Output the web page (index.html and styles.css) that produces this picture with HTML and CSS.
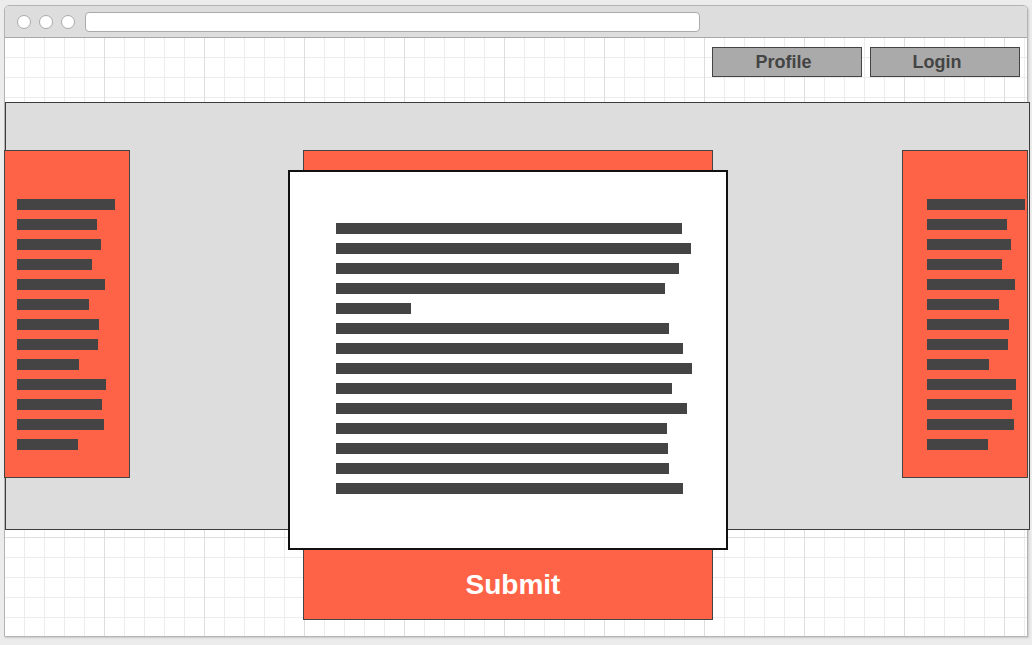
FILE: index.html
```html
<!DOCTYPE html>
<html>
<head>
<meta charset="utf-8">
<link rel="stylesheet" href="styles.css">
</head>
<body>
<div class="window">
  <div class="titlebar">
    <span class="dot"></span><span class="dot"></span><span class="dot"></span>
    <div class="address"></div>
  </div>
  <div class="content">
    <div class="header">
      <button class="btn btn-profile">Profile</button>
      <button class="btn btn-login">Login</button>
    </div>
    <div class="band">
      <div class="side side-left">
        <div class="bars">
          <i class="bar" style="width:98px"></i><i class="bar" style="width:80px"></i><i class="bar" style="width:84px"></i><i class="bar" style="width:75px"></i><i class="bar" style="width:88px"></i><i class="bar" style="width:72px"></i><i class="bar" style="width:82px"></i><i class="bar" style="width:81px"></i><i class="bar" style="width:62px"></i><i class="bar" style="width:89px"></i><i class="bar" style="width:85px"></i><i class="bar" style="width:87px"></i><i class="bar" style="width:61px"></i>
        </div>
      </div>
      <div class="center">
        <div class="card">
          <div class="bars">
            <i class="bar" style="width:346px"></i><i class="bar" style="width:355px"></i><i class="bar" style="width:343px"></i><i class="bar" style="width:329px"></i><i class="bar" style="width:75px"></i><i class="bar" style="width:333px"></i><i class="bar" style="width:347px"></i><i class="bar" style="width:356px"></i><i class="bar" style="width:336px"></i><i class="bar" style="width:351px"></i><i class="bar" style="width:331px"></i><i class="bar" style="width:332px"></i><i class="bar" style="width:333px"></i><i class="bar" style="width:347px"></i>
          </div>
        </div>
        <div class="submit">Submit</div>
      </div>
      <div class="side side-right">
        <div class="bars">
          <i class="bar" style="width:98px"></i><i class="bar" style="width:80px"></i><i class="bar" style="width:84px"></i><i class="bar" style="width:75px"></i><i class="bar" style="width:88px"></i><i class="bar" style="width:72px"></i><i class="bar" style="width:82px"></i><i class="bar" style="width:81px"></i><i class="bar" style="width:62px"></i><i class="bar" style="width:89px"></i><i class="bar" style="width:85px"></i><i class="bar" style="width:87px"></i><i class="bar" style="width:61px"></i>
        </div>
      </div>
    </div>
  </div>
</div>
</body>
</html>
```
FILE: styles.css
```css
* { box-sizing: border-box; }
html, body { margin: 0; }
body {
  background: #ececec;
  padding: 5px 0 0 4px;
  font-family: "Liberation Sans", Arial, sans-serif;
  overflow: hidden;
  width: 1032px;
  height: 645px;
}
.window {
  width: 1024px;
  height: 632px;
  border: 1px solid #b4b4b4;
  border-radius: 5px 5px 0 0;
  background: #fff;
  box-shadow: 1px 1px 2px rgba(0,0,0,0.15);
  display: flex;
  flex-direction: column;
}
.titlebar {
  height: 32px;
  flex: none;
  background: #dddddd;
  border-bottom: 1px solid #a8a8a8;
  border-radius: 4px 4px 0 0;
  display: flex;
  align-items: center;
  padding-left: 12px;
  gap: 8px;
}
.dot {
  width: 14px;
  height: 14px;
  border-radius: 50%;
  background: #fff;
  border: 1px solid #aaaaaa;
  flex: none;
}
.address {
  margin-left: 2px;
  width: 615px;
  height: 20px;
  background: #fff;
  border: 1px solid #aaaaaa;
  border-radius: 4px;
}
.content {
  flex: 1;
  background-color: #fff;
  background-image:
    linear-gradient(to right, #dedede 1px, transparent 1px),
    linear-gradient(to bottom, #dedede 1px, transparent 1px),
    linear-gradient(to right, #ececec 1px, transparent 1px),
    linear-gradient(to bottom, #ececec 1px, transparent 1px);
  background-size: 100px 100px, 100px 100px, 20px 20px, 20px 20px;
  background-position: -1px -1px;
}
.header {
  height: 64px;
  display: flex;
  justify-content: flex-end;
  align-items: flex-start;
  padding: 9px 7px 0 0;
  gap: 8px;
}
.btn {
  width: 150px;
  height: 30px;
  background: #aaaaaa;
  border: 1px solid #444;
  color: #444;
  font-family: "Liberation Sans", Arial, sans-serif;
  font-weight: bold;
  font-size: 18px;
  padding: 0;
  margin: 0;
}
.btn-profile { padding-right: 7px; }
.btn-login { padding-right: 16px; }
.band {
  width: 1025px;
  height: 428px;
  background: #dddddd;
  border: 1px solid #3c3c3c;
  display: flex;
  align-items: flex-start;
  padding-top: 47px;
}
.side {
  width: 126px;
  height: 328px;
  flex: none;
  background: #ff6347;
  border: 1px solid #444;
  padding-top: 48px;
}
.side-left { margin-left: -2px; padding-left: 12px; }
.side-right { margin-left: 189px; padding-left: 24px; }
.bars {
  display: flex;
  flex-direction: column;
  align-items: flex-start;
  gap: 9px;
}
.bar {
  display: block;
  height: 11px;
  background: #444444;
}
.center {
  position: relative;
  flex: none;
  margin-left: 173px;
  width: 410px;
  height: 470px;
  background: #ff6347;
  border: 1px solid #444;
  display: flex;
  flex-direction: column;
  justify-content: flex-end;
}
.card {
  position: absolute;
  top: 19px;
  left: -16px;
  width: 440px;
  height: 380px;
  background: #fff;
  border: 2px solid #111;
  padding: 51px 0 0 46px;
}
.submit {
  height: 69px;
  display: flex;
  align-items: center;
  justify-content: center;
  padding-left: 10px;
  color: #fff;
  font-weight: bold;
  font-size: 28px;
}
```
